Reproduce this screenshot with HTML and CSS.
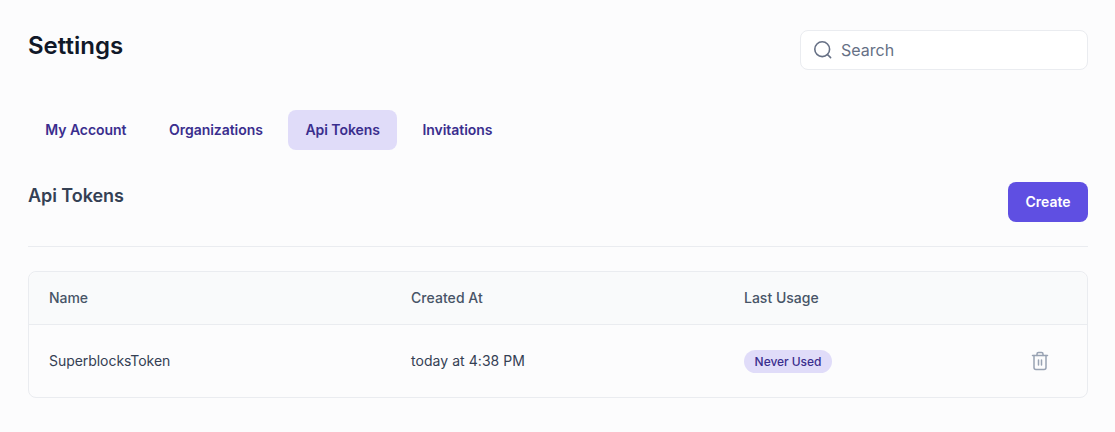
FILE: index.html
```html
<!DOCTYPE html>
<html lang="en">
<head>
<meta charset="utf-8">
<title>Settings</title>
<link rel="stylesheet" href="styles.css">
</head>
<body>
<main class="page">
  <header class="top">
    <h1 class="title">Settings</h1>
    <label class="search">
      <svg class="search-icon" width="20" height="20" viewBox="0 0 20 20" fill="none" stroke="currentColor" stroke-width="1.6" stroke-linecap="round" stroke-linejoin="round"><circle cx="9.2" cy="9.2" r="7.4"/><path d="m17.6 17.6-2.9-2.9"/></svg>
      <span class="search-text">Search</span>
    </label>
  </header>
  <nav class="tabs">
    <a class="tab">My Account</a>
    <a class="tab">Organizations</a>
    <a class="tab active">Api Tokens</a>
    <a class="tab">Invitations</a>
  </nav>
  <section class="head">
    <h2 class="subtitle">Api Tokens</h2>
    <button class="create">Create</button>
  </section>
  <div class="table">
    <div class="row header">
      <div class="c1">Name</div>
      <div class="c2">Created At</div>
      <div class="c3">Last Usage</div>
    </div>
    <div class="row body">
      <div class="c1">SuperblocksToken</div>
      <div class="c2">today at 4:38 PM</div>
      <div class="c3"><span class="badge">Never Used</span></div>
      <svg class="trash" width="20" height="20" viewBox="0 0 20 20" fill="none" stroke="currentColor" stroke-width="1.5" stroke-linecap="round" stroke-linejoin="round"><path d="M2.5 4.5h15"/><path d="M4 4.5v12a2 2 0 0 0 2 2h8a2 2 0 0 0 2-2v-12"/><path d="M7 4.5V3a1.5 1.5 0 0 1 1.5-1.5h3A1.5 1.5 0 0 1 13 3v1.5"/><path d="M8.5 9v5"/><path d="M11.5 9v5"/></svg>
    </div>
  </div>
</main>
</body>
</html>
```
FILE: styles.css
```css
* { box-sizing: border-box; }
html, body { margin: 0; padding: 0; }
body { background: #fcfcfd; font-family: Inter, "Liberation Sans", sans-serif; color: #344054; width: 1115px; height: 432px; overflow: hidden; }
.page { padding: 30px 27px 0 28px; }
.top { display: flex; justify-content: space-between; align-items: flex-start; height: 80px; }
.title { margin: 0; font-size: 24px; line-height: 32px; font-weight: 600; color: #101828; }
.search { display: flex; align-items: center; gap: 8px; width: 288px; height: 40px; padding: 0 12px; background: #fff; border: 1px solid #eaecf0; border-radius: 8px; color: #667085; font-size: 16px; }
.search-icon { flex: none; }
.tabs { display: flex; gap: 8px; height: 40px; }
.tab { display: flex; align-items: center; padding: 0 17.3px 2px; font-size: 14px; font-weight: 600; letter-spacing: -0.05px; color: #3a2e8e; border-radius: 8px; }
.tab.active { background: #e0dcf9; }
.head { display: flex; justify-content: space-between; align-items: flex-start; margin-top: 32px; padding-bottom: 24px; border-bottom: 1px solid #eaecf0; }
.subtitle { margin: 0; font-size: 18px; line-height: 28px; font-weight: 600; letter-spacing: -0.05px; color: #344054; }
.create { width: 80px; height: 40px; padding: 0 0 1px; border: 0; border-radius: 8px; background: #5f4fe2; color: #fff; font: 600 14px Inter, "Liberation Sans", sans-serif; }
.table { margin-top: 24px; border: 1px solid #eaecf0; border-radius: 8px; font-size: 14px; }
.row { display: grid; grid-template-columns: 362px 333px 1fr; align-items: center; padding-left: 20px; position: relative; }
.header { height: 53px; padding-bottom: 2px; background: #f9fafb; border-bottom: 1px solid #eaecf0; border-radius: 8px 8px 0 0; font-weight: 500; color: #475467; }
.body { height: 72px; padding-bottom: 2px; color: #344054; }
.c1 { letter-spacing: -0.05px; }
.c2 { letter-spacing: 0.05px; }
.badge { display: block; width: 88px; height: 23px; margin-top: 2px; font-size: 12px; line-height: 23px; font-weight: 500; text-align: center; letter-spacing: -0.05px; color: #3a2e8e; background: #e0dcf9; border-radius: 12px; }
.trash { position: absolute; right: 37px; top: 26px; color: #98a2b3; }
```
